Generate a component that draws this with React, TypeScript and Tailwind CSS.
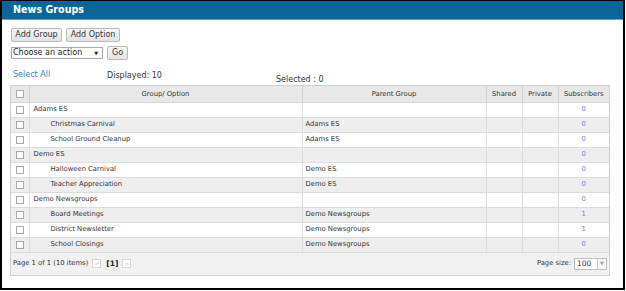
import React from "react";

const rows = [
  { name: "Adams ES", parent: "", child: false, subs: "0" },
  { name: "Christmas Carnival", parent: "Adams ES", child: true, subs: "0" },
  { name: "School Ground Cleanup", parent: "Adams ES", child: true, subs: "0" },
  { name: "Demo ES", parent: "", child: false, subs: "0" },
  { name: "Halloween Carnival", parent: "Demo ES", child: true, subs: "0" },
  { name: "Teacher Appreciation", parent: "Demo ES", child: true, subs: "0" },
  { name: "Demo Newsgroups", parent: "", child: false, subs: "0" },
  { name: "Board Meetings", parent: "Demo Newsgroups", child: true, subs: "1" },
  { name: "District Newsletter", parent: "Demo Newsgroups", child: true, subs: "1" },
  { name: "School Closings", parent: "Demo Newsgroups", child: true, subs: "0" },
];

function Box() {
  return <span className="inline-block w-[8px] h-[8px] border border-[#a8a8a8] bg-white align-middle" />;
}

export default function App() {
  return (
    <div className="w-[626px] h-[291px] bg-white" style={{ fontFamily: '"DejaVu Sans", Verdana, sans-serif' }}>
      <div className="w-[625px] h-[290px] border-t border-l-2 border-r-2 border-b-2 border-black flex flex-col">
        <div className="h-[18px] bg-[#0b6598] flex items-center pl-[11px]">
          <span className="text-white font-bold text-[9.6px] leading-none">News Groups</span>
        </div>
        <div className="h-px bg-[#6aa5cf]" />
        <div className="flex gap-[4px] pl-[9px] mt-[8px]">
          <button className="h-[14px] w-[51px] border border-[#b8b8b8] rounded-[2px] bg-gradient-to-b from-[#f8f8f8] to-[#e2e2e2] text-[8px] text-[#333] leading-none">Add Group</button>
          <button className="h-[14px] w-[54px] border border-[#b8b8b8] rounded-[2px] bg-gradient-to-b from-[#f8f8f8] to-[#e2e2e2] text-[8px] text-[#333] leading-none">Add Option</button>
        </div>
        <div className="flex items-center gap-[4px] pl-[9px] mt-[4px]">
          <div className="h-[12px] w-[92px] border border-[#a9a9a9] bg-white flex items-center justify-between px-[1px] text-[8px] text-[#222] leading-none">
            <span>Choose an action</span>
            <span className="text-[5px] mr-[3px]">▼</span>
          </div>
          <button className="h-[14px] w-[21px] border border-[#b8b8b8] rounded-[2px] bg-gradient-to-b from-[#f8f8f8] to-[#e2e2e2] text-[8px] text-[#333] leading-none">Go</button>
        </div>
        <div className="flex h-[16px] mt-[9px] pl-[11px] text-[8px] leading-[12px] text-[#333]">
          <span className="text-[#3c7fc1] w-[94px]">Select All</span>
          <span className="pt-px w-[169px]">Displayed: 10</span>
          <span className="pt-[5px]">Selected : 0</span>
        </div>
        <div className="ml-[8px] w-[600px] border border-[#cfcfcf] text-[6.8px] text-[#333]">
          <table className="table-fixed border-collapse w-[598px]">
            <colgroup>
              <col className="w-[18px]" />
              <col className="w-[273px]" />
              <col className="w-[184px]" />
              <col className="w-[36px]" />
              <col className="w-[36px]" />
              <col className="w-[51px]" />
            </colgroup>
            <thead>
              <tr className="h-[16px] bg-[#e8e8e8]">
                <th className="border-r border-b border-[#d2d2d2] text-center font-normal"><Box /></th>
                <th className="border-r border-b border-[#d2d2d2] font-normal text-center">Group/ Option</th>
                <th className="border-r border-b border-[#d2d2d2] font-normal text-center">Parent Group</th>
                <th className="border-r border-b border-[#d2d2d2] font-normal text-center">Shared</th>
                <th className="border-r border-b border-[#d2d2d2] font-normal text-center">Private</th>
                <th className="border-b border-[#d2d2d2] font-normal text-center">Subscribers</th>
              </tr>
            </thead>
            <tbody>
              {rows.map((r, i) => (
                <tr key={i} className={i % 2 === 0 ? "h-[15px] bg-white" : "h-[15px] bg-[#eeeeee]"}>
                  <td className="border-r border-b border-[#dcdcdc] text-center leading-none"><Box /></td>
                  <td className={r.child ? "border-r border-b border-[#dcdcdc] pl-[21px]" : "border-r border-b border-[#dcdcdc] pl-[4px]"}>{r.name}</td>
                  <td className="border-r border-b border-[#dcdcdc] pl-[3px]">{r.parent}</td>
                  <td className="border-r border-b border-[#dcdcdc]"></td>
                  <td className="border-r border-b border-[#dcdcdc]"></td>
                  <td className="border-b border-[#dcdcdc] text-center text-[#7b7bf5]">{r.subs}</td>
                </tr>
              ))}
            </tbody>
          </table>
          <div className="h-[22px] bg-[#f1f1f1] flex items-center justify-between pl-[2px] pr-[2px]">
            <div className="flex items-center">
              <span>Page 1 of 1 (10 items)</span>
              <span className="ml-[4px] w-[9px] h-[9px] border border-[#d6d6d6] bg-white flex items-center justify-center text-[#c0c0c0] text-[6px] leading-none">&lt;</span>
              <span className="ml-[5px] font-bold text-[7.5px] text-[#222]">[1]</span>
              <span className="ml-[4px] w-[9px] h-[9px] border border-[#d6d6d6] bg-white flex items-center justify-center text-[#c0c0c0] text-[6px] leading-none">&gt;</span>
            </div>
            <div className="flex items-center">
              <span>Page size:</span>
              <div className="ml-[3px] h-[12px] flex border border-[#bdbdbd] bg-white">
                <span className="w-[22px] pl-[2px] text-[7.5px] leading-[10px] text-[#333]">100</span>
                <span className="w-[9px] h-[10px] border-l border-[#cfcfcf] bg-[#f6f6f6] flex items-center justify-center text-[#a0a0a0] text-[5px]">▼</span>
              </div>
            </div>
          </div>
        </div>
      </div>
    </div>
  );
}
